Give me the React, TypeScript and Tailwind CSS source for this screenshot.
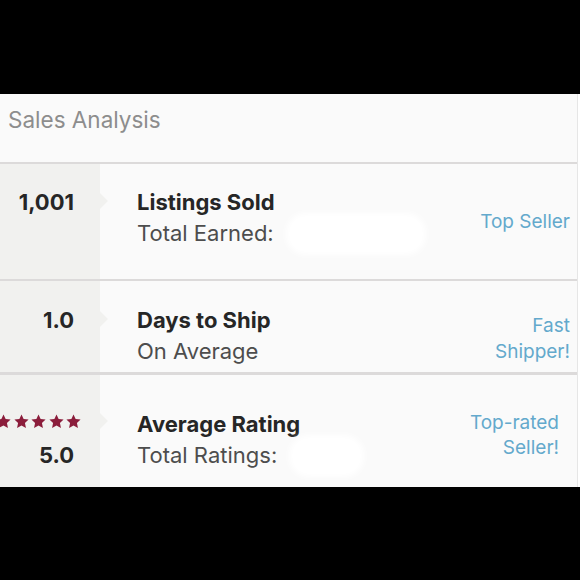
import { Fragment } from 'react'

const font = { fontFamily: 'Inter, "Liberation Sans", sans-serif' }

function Star() {
  return (
    <svg viewBox="0 0 24 24" className="h-[15px] w-[15px] flex-shrink-0 fill-[#8b1d3b]">
      <path d="M12 0.8l3.4 7.2 7.9.9-5.8 5.4 1.6 7.9L12 18.2l-7.1 4 1.6-7.9L.7 8.9l7.9-.9z" />
    </svg>
  )
}

function Notch({ top }: { top: number }) {
  return (
    <div
      className="absolute left-[100px] h-0 w-0 border-y-[8px] border-l-[8px] border-y-transparent border-l-[#f1f1ef]"
      style={{ top }}
    />
  )
}

function Redacted({ width }: { width: number }) {
  return (
    <div
      className="-my-[6px] ml-3 h-[42px] rounded-[20px] bg-white blur-[3px]"
      style={{ width }}
    />
  )
}

export default function App() {
  return (
    <div className="flex h-[580px] w-[580px] flex-col bg-black" style={font}>
      <div className="h-[94px]" />
      <div className="flex h-[393px] bg-white">
        <div className="flex w-[578px] flex-col border-r border-[#e6e6e6] bg-[#fafafa]">
          <div className="h-[70px] border-b-2 border-[#dcdada] pl-2 pt-[11px]">
            <h2 className="text-[22.5px] leading-[30px] text-[#8d8d8d]">Sales Analysis</h2>
          </div>

          {/* listings */}
          <div className="relative flex h-[117px] border-b-2 border-[#dcdada]">
            <div className="w-[100px] bg-[#f1f1ef] pr-[26px] pt-[23px] text-right">
              <p className="text-[22px] font-bold leading-[31px] text-[#262626]">1,001</p>
            </div>
            <Notch top={29} />
            <div className="flex-1 pl-[37px] pt-[23px]">
              <p className="text-[22px] font-bold leading-[31px] text-[#262626]">Listings Sold</p>
              <div className="flex h-[31px] items-center">
                <p className="text-[22px] leading-[31px] text-[#4d4d4d]">Total Earned:</p>
                <Redacted width={140} />
              </div>
            </div>
            <div className="pr-[7px] pt-[45px] text-right text-[19px] leading-[26px] text-[#63a9cc]">
              Top Seller
            </div>
          </div>

          {/* shipping */}
          <div className="relative flex h-[94px] border-b-[3px] border-[#dcdada]">
            <div className="w-[100px] bg-[#f1f1ef] pr-[26px] pt-[24px] text-right">
              <p className="text-[22px] font-bold leading-[31px] text-[#262626]">1.0</p>
            </div>
            <Notch top={30} />
            <div className="flex-1 pl-[37px] pt-[24px]">
              <p className="text-[22px] font-bold leading-[31px] text-[#262626]">Days to Ship</p>
              <p className="text-[22px] leading-[31px] text-[#4d4d4d]">On Average</p>
            </div>
            <div className="pr-[7px] pt-[32px] text-right text-[19px] leading-[26px] text-[#63a9cc]">
              {['Fast', 'Shipper!'].map((l) => (
                <Fragment key={l}>
                  {l}
                  <br />
                </Fragment>
              ))}
            </div>
          </div>

          {/* rating */}
          <div className="relative flex flex-1">
            <div className="w-[100px] overflow-hidden bg-[#f1f1ef] pr-[19px] pt-[36px]">
              <div className="flex h-[20px] items-center justify-end gap-[2.5px]">
                {[0, 1, 2, 3, 4].map((i) => (
                  <Star key={i} />
                ))}
              </div>
              <p className="mt-[9px] pr-[7px] text-right text-[22px] font-bold leading-[31px] text-[#262626]">
                5.0
              </p>
            </div>
            <Notch top={38} />
            <div className="flex-1 pl-[37px] pt-[34px]">
              <p className="text-[22px] font-bold leading-[31px] text-[#262626]">Average Rating</p>
              <div className="flex h-[31px] items-center">
                <p className="text-[22px] leading-[31px] text-[#4d4d4d]">Total Ratings:</p>
                <Redacted width={75} />
              </div>
            </div>
            <div className="pr-[18px] pt-[35px] text-right text-[19px] leading-[25px] text-[#63a9cc]">
              Top-rated
              <br />
              Seller!
            </div>
          </div>
        </div>
      </div>
    </div>
  )
}
